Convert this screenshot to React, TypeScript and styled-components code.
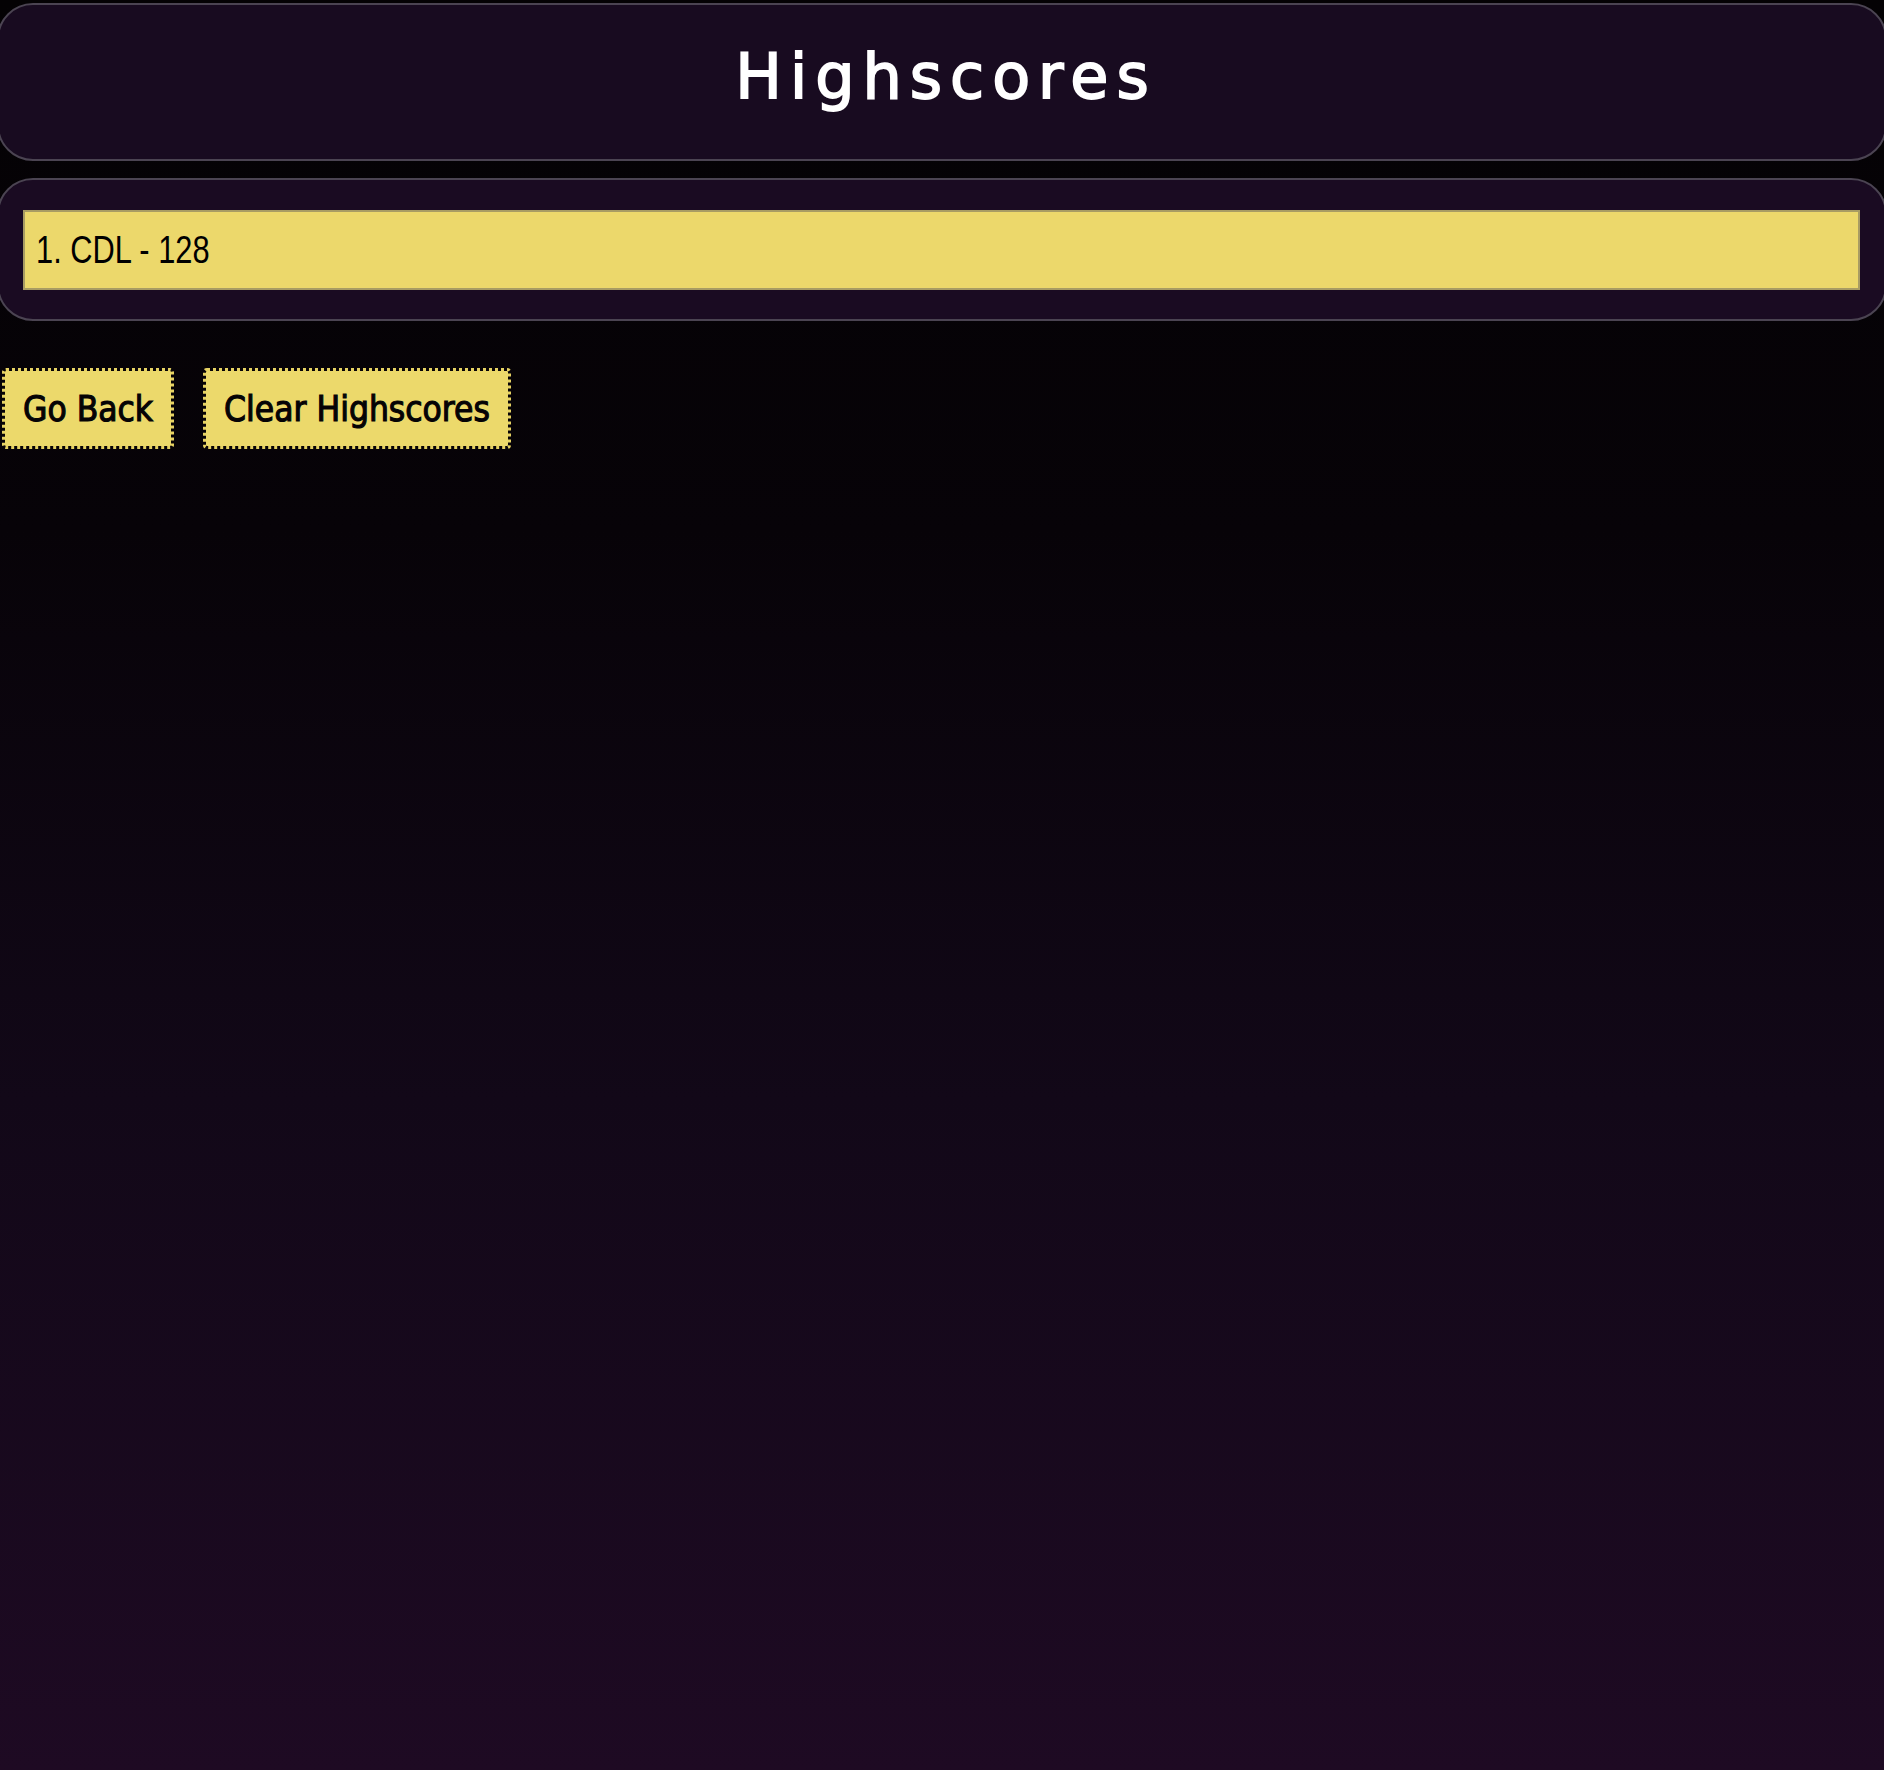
import React from "react";
import styled, { createGlobalStyle } from "styled-components";

const GlobalStyle = createGlobalStyle`
  html, body {
    margin: 0;
    padding: 0;
  }
  body {
    font-family: "Liberation Sans", Arial, sans-serif;
    background: #040204;
    overflow-x: hidden;
  }
`;

const Page = styled.div`
  min-height: 1770px;
  box-sizing: border-box;
  padding-top: 3px;
  background: linear-gradient(
    180deg,
    #040204 0%,
    #070308 30%,
    #120818 62%,
    #1e0a23 100%
  );
`;

const Card = styled.section`
  box-sizing: border-box;
  margin: 0 -3px;
  width: calc(100% + 6px);
  background: #180b20;
  border: 2px solid #4b4452;
  border-radius: 36px;
`;

const Header = styled(Card)`
  height: 158px;
  display: flex;
  align-items: center;
  justify-content: center;
  padding-bottom: 10px;
`;

const Title = styled.h1`
  margin: 0;
  font-family: "DejaVu Sans", Verdana, sans-serif;
  font-weight: 400;
  font-size: 62px;
  line-height: 1;
  letter-spacing: 8px;
  padding-left: 8px;
  color: #ffffff;
  -webkit-text-stroke: 1.8px #ffffff;
`;

const ScoreCard = styled(Card)`
  margin-top: 17px;
  padding: 30px 25px 29px 24px;
  background: #1a0b22;
`;

const ScoreList = styled.ol`
  list-style: none;
  margin: 0;
  padding: 0;
`;

const ScoreItem = styled.li`
  box-sizing: border-box;
  height: 80px;
  display: flex;
  align-items: center;
  padding-left: 11px;
  background: #ecd86b;
  border: 2px solid #a89c63;
  color: #000000;
`;

const ScoreText = styled.span`
  display: inline-block;
  font-family: "Liberation Sans", Arial, sans-serif;
  font-size: 39px;
  transform: scaleX(0.79);
  transform-origin: left center;
  white-space: nowrap;
`;

const Actions = styled.div`
  display: flex;
  gap: 29px;
  margin-top: 47px;
  padding-left: 2px;
`;

const ActionButton = styled.button`
  box-sizing: border-box;
  height: 81px;
  padding: 0 18px;
  background: #ecd96b;
  background-clip: padding-box;
  border: 3px dotted #e6d263;
  border-radius: 4px;
  font-family: "DejaVu Sans Condensed", "DejaVu Sans", sans-serif;
  font-stretch: condensed;
  font-size: 35px;
  font-weight: 400;
  color: #050305;
  cursor: pointer;
  -webkit-text-stroke: 1.1px #050305;
`;

const scores = [{ name: "CDL", score: 128 }];

export default function App() {
  return (
    <>
      <GlobalStyle />
      <Page>
        <Header>
          <Title>Highscores</Title>
        </Header>
        <ScoreCard>
          <ScoreList>
            {scores.map((s, i) => (
              <ScoreItem key={s.name}>
                <ScoreText>
                  {i + 1}. {s.name} - {s.score}
                </ScoreText>
              </ScoreItem>
            ))}
          </ScoreList>
        </ScoreCard>
        <Actions>
          <ActionButton>Go Back</ActionButton>
          <ActionButton>Clear Highscores</ActionButton>
        </Actions>
      </Page>
    </>
  );
}
